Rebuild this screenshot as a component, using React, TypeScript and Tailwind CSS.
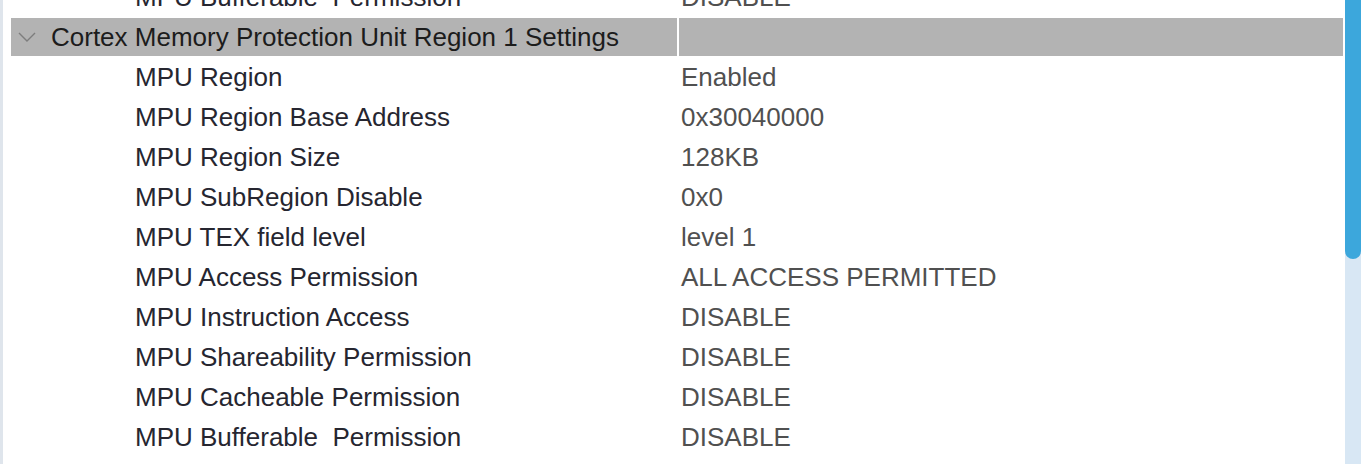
import React from 'react';

const rows: [string, string][] = [
  ['MPU Region', 'Enabled'],
  ['MPU Region Base Address', '0x30040000'],
  ['MPU Region Size', '128KB'],
  ['MPU SubRegion Disable', '0x0'],
  ['MPU TEX field level', 'level 1'],
  ['MPU Access Permission', 'ALL ACCESS PERMITTED'],
  ['MPU Instruction Access', 'DISABLE'],
  ['MPU Shareability Permission', 'DISABLE'],
  ['MPU Cacheable Permission', 'DISABLE'],
  ['MPU Bufferable\u00a0 Permission', 'DISABLE'],
];

const Row: React.FC<{ label: string; value: string }> = ({ label, value }) => (
  <div className="grid grid-cols-[666px_2px_664px] h-[40px] items-center">
    <div className="pl-[124px] text-[#262630] whitespace-pre">{label}</div>
    <div />
    <div className="pl-[2px] text-[#505050] whitespace-pre">{value}</div>
  </div>
);

const App: React.FC = () => {
  return (
    <div
      className="flex h-[464px] w-[1363px] overflow-hidden bg-white text-[26px] leading-none"
      style={{ fontFamily: '"Liberation Sans", Arial, sans-serif' }}
    >
      {/* left frame edge */}
      <div className="w-[3px] bg-[#dfe5ec]" />
      <div className="w-[8px]" />

      {/* property table, scrolled */}
      <div className="w-[1332px]">
        <div className="-mt-[23px] flex flex-col">
          <Row label="MPU Bufferable  Permission" value="DISABLE" />

          {/* group header */}
          <div className="h-[40px] py-[1px]">
            <div className="grid grid-cols-[666px_2px_664px] h-full">
              <div className="bg-[#b3b3b3] flex items-center">
                <svg width="18" height="10" viewBox="0 0 18 10" className="ml-[7px] mr-[15px]">
                  <path d="M1 1 L9 9 L17 1" fill="none" stroke="#7d7d7d" strokeWidth="1.4" />
                </svg>
                <span className="text-[#1c1c1c]">Cortex Memory Protection Unit Region 1 Settings</span>
              </div>
              <div className="bg-white" />
              <div className="bg-[#b3b3b3]" />
            </div>
          </div>

          {rows.map(([l, v]) => (
            <Row key={l} label={l} value={v} />
          ))}
        </div>
      </div>

      {/* scrollbar */}
      <div className="ml-[2px] w-[16px] flex flex-col bg-[#d8e7f4]">
        <div className="h-[259px] bg-[#3ca7dc] rounded-b-[8px]" />
      </div>
    </div>
  );
};

export default App;
